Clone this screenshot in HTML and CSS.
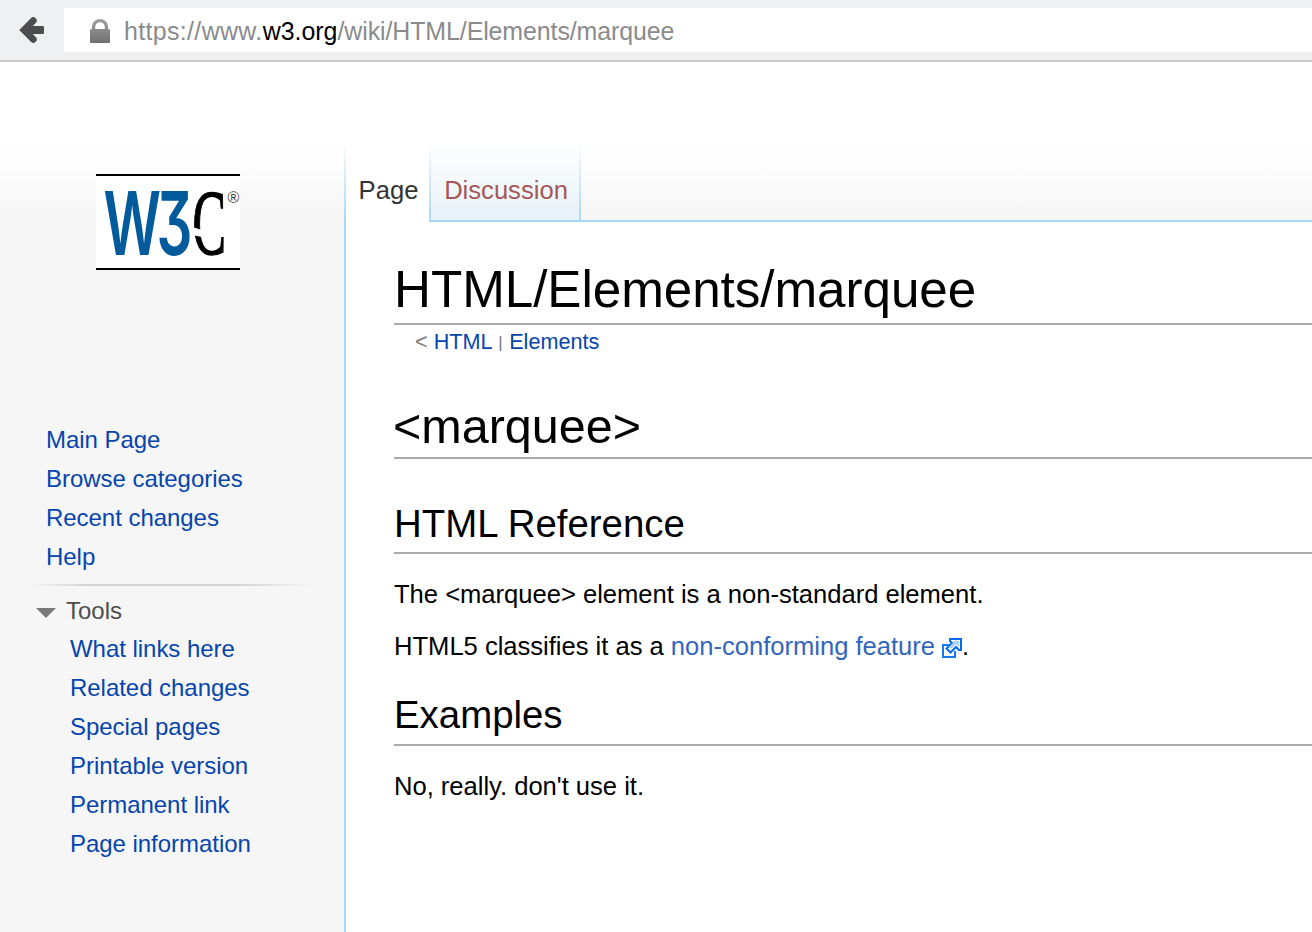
FILE: index.html
```html
<!DOCTYPE html>
<html lang="en">
<head>
<meta charset="utf-8">
<title>HTML/Elements/marquee</title>
<link rel="stylesheet" href="styles.css">
</head>
<body>
<header class="toolbar">
  <button class="back" aria-label="Back">
    <svg width="26" height="28" viewBox="0 0 26 28"><path d="M14.3 4.6 5 14l9.3 9.4" fill="none" stroke="#4d4d4d" stroke-width="6.8" stroke-linecap="round" stroke-linejoin="miter"/><path d="M5 10h18.8q1.2 0 1.2 1.2v5.6q0 1.2-1.2 1.2H5z" fill="#4d4d4d"/></svg>
  </button>
  <div class="address">
    <svg class="lock" width="20" height="24" viewBox="0 0 20 24"><defs><linearGradient id="lg" x1="0" y1="0" x2="0" y2="24" gradientUnits="userSpaceOnUse"><stop offset="0" stop-color="#a0a0a0"/><stop offset="1" stop-color="#707070"/></linearGradient></defs><path d="M3.6 12V8a6.4 6.4 0 0 1 12.8 0v4" fill="none" stroke="url(#lg)" stroke-width="3.2"/><rect y="10" width="20" height="14" rx="1.2" fill="url(#lg)"/></svg>
    <span class="url"><span class="scheme">https://www.</span><b>w3.org</b><span class="path">/wiki/HTML/Elements/marquee</span></span>
  </div>
</header>
<div class="page">
  <aside class="sidebar">
    <svg class="logo" width="144" height="96" viewBox="0 0 144 96">
      <rect width="144" height="96" fill="#fff"/>
      <rect width="144" height="2"/><rect y="94" width="144" height="2"/>
      <text class="mark blue" transform="translate(7.5 81) scale(.64 1)">W</text>
      <text class="mark blue three" transform="translate(60.5 81) scale(.64 1)">3</text>
      <text class="mark serif" transform="translate(96.500 80) scale(.54 1)">C</text>
      <path d="M96 53l10 3v7l-10-2z" fill="#fff"/>
      <text class="reg" x="131.5" y="29">®</text>
    </svg>
    <nav class="links">
      <a>Main Page</a><a>Browse categories</a><a>Recent changes</a><a>Help</a>
    </nav>
    <div class="rule"></div>
    <h3 class="tools"><svg width="20" height="10" viewBox="0 0 20 10"><path d="M0 0h20L10 10z" fill="#797979"/></svg>Tools</h3>
    <nav class="links nested">
      <a>What links here</a><a>Related changes</a><a>Special pages</a><a>Printable version</a><a>Permanent link</a><a>Page information</a>
    </nav>
  </aside>
  <div class="divider"></div>
  <main class="main">
    <div class="tabs">
      <span class="tab current">Page</span>
      <span class="tab-edge"></span>
      <span class="tab discussion">Discussion</span>
      <span class="tab-edge"></span>
      <span class="tab-rest"></span>
    </div>
    <article class="content">
      <h1 class="title">HTML/Elements/marquee</h1>
      <div class="crumbs">&lt; <a>HTML</a> <span class="bar">|</span> <a>Elements</a></div>
      <h1 class="heading">&lt;marquee&gt;</h1>
      <h2 class="subheading">HTML Reference</h2>
      <p>The &lt;marquee&gt; element is a non-standard element.</p>
      <p>HTML5 classifies it as a <a class="external">non-conforming feature</a><svg class="ext" width="20" height="20" viewBox="0 0 20 20"><path d="M8 7H1v12h12v-6" fill="#fff" stroke="#1a78ec" stroke-width="2"/><path d="M8 1h11v11h-2l-3-3-5.500 5.500-4-4L10 5 8 3z" fill="#fff" stroke="#0a6cec" stroke-width="2"/><path d="M11 3h6v6l-3-3-5 5-2-2 5-5z" fill="#a9d0fb"/></svg>.</p>
      <h2 class="subheading examples">Examples</h2>
      <p>No, really. don't use it.</p>
    </article>
  </main>
</div>
</body>
</html>
```
FILE: styles.css
```css
* { box-sizing: border-box; }
body { margin: 0; height: 932px; overflow: hidden; background: #fff; font-family: "Liberation Sans", Arial, sans-serif; font-size: 25.6px; color: #000; }
svg { display: block; flex: none; }
.toolbar { display: flex; height: 62px; padding-top: 8px; background: #eff0f2; border-bottom: 2px solid #cacaca; }
.back { width: 64px; height: 44px; padding: 0 0 0 19px; border: 0; background: none; }
.address { flex: 1; height: 44px; display: flex; align-items: center; padding-left: 26px; background: #fff; }
.lock { margin-top: 1px; }
.url { margin-left: 14px; padding-top: 2px; font-size: 24.95px; line-height: 44px; color: #8b8b8b; white-space: pre; }
.url b { font-weight: normal; color: #000; }
.scheme { letter-spacing: .35px; }
.path { letter-spacing: -.1px; }
.page { display: flex; height: 870px; background: linear-gradient(#fff 80px, #f6f6f6 160px); }
.sidebar { width: 344px; padding-top: 112px; }
.logo { margin-left: 96px; }
.mark { font-size: 88px; font-family: Inter, sans-serif; font-weight: 600; }
.blue { fill: #005a9c; }
.three { font-feature-settings: "cv09"; }
.serif { font-family: "Liberation Serif", serif; font-size: 93px; font-weight: normal; stroke: #000; stroke-width: 1.5px; }
.reg { font-family: "Liberation Sans", sans-serif; font-size: 16px; fill: #444; }
.links { display: flex; flex-direction: column; margin: 150px 0 0 46px; }
.links a { font-size: 24px; line-height: 39px; color: #0645ad; letter-spacing: -.04px; }
.rule { width: 280px; height: 2px; margin: 8px 0 0 30px; background: linear-gradient(to right, transparent, #d4d4d4 20%, #d4d4d4 75%, transparent); }
.tools { display: flex; align-items: center; gap: 10px; margin: 5px 0 0 36px; font-size: 24px; font-weight: normal; line-height: 39px; color: #4d4d4d; }
.tools svg { margin-top: 4px; }
.nested { margin: -1px 0 0 70px; }
.divider { width: 2px; margin-top: 80px; background: linear-gradient(rgba(167,215,249,0), #a7d7f9 80px); }
.main { flex: 1; min-width: 0; }
.tabs { display: flex; height: 160px; padding-top: 80px; }
.tab { height: 80px; padding-top: 28px; line-height: 40px; text-align: center; }
.current { width: 83px; padding-left: 2px; color: #333; background: #fff; }
.discussion { width: 148px; padding-left: 2px; color: #a55858; border-bottom: 2px solid #a7d7f9; background: linear-gradient(#fff, #e8f2f8); }
.tab-edge { width: 2px; height: 80px; background: linear-gradient(rgba(167,215,249,0), #a7d7f9); }
.tab-rest { flex: 1; border-bottom: 2px solid #a7d7f9; }
.content { height: 710px; padding: 38px 0 0 48px; background: #fff; }
h1, h2 { margin: 0; font-weight: normal; border-bottom: 2px solid #aaa; }
.title { height: 65px; line-height: 60px; font-size: 51.2px; letter-spacing: -.05px; }
.crumbs { height: 34px; margin-left: 21px; font-size: 21.6px; line-height: 34px; color: #797979; }
.crumbs a { color: #0645ad; }
.bar { margin: 0 .6px; font-size: 17px; line-height: 1; vertical-align: 1px; }
.heading { height: 61px; margin-top: 39px; line-height: 56px; font-size: 48.5px; text-indent: -1px; }
.subheading { height: 55px; margin-top: 40px; line-height: 50px; font-size: 38.4px; }
.content p { display: flex; margin: 20px 0 0; line-height: 40px; white-space: pre; letter-spacing: -.02px; }
.content p + p { margin-top: 12px; }
.ext { margin: 12px 0 0 7px; }
.external { color: #3366bb; }
.content .examples { height: 56px; margin-top: 24px; }
```
